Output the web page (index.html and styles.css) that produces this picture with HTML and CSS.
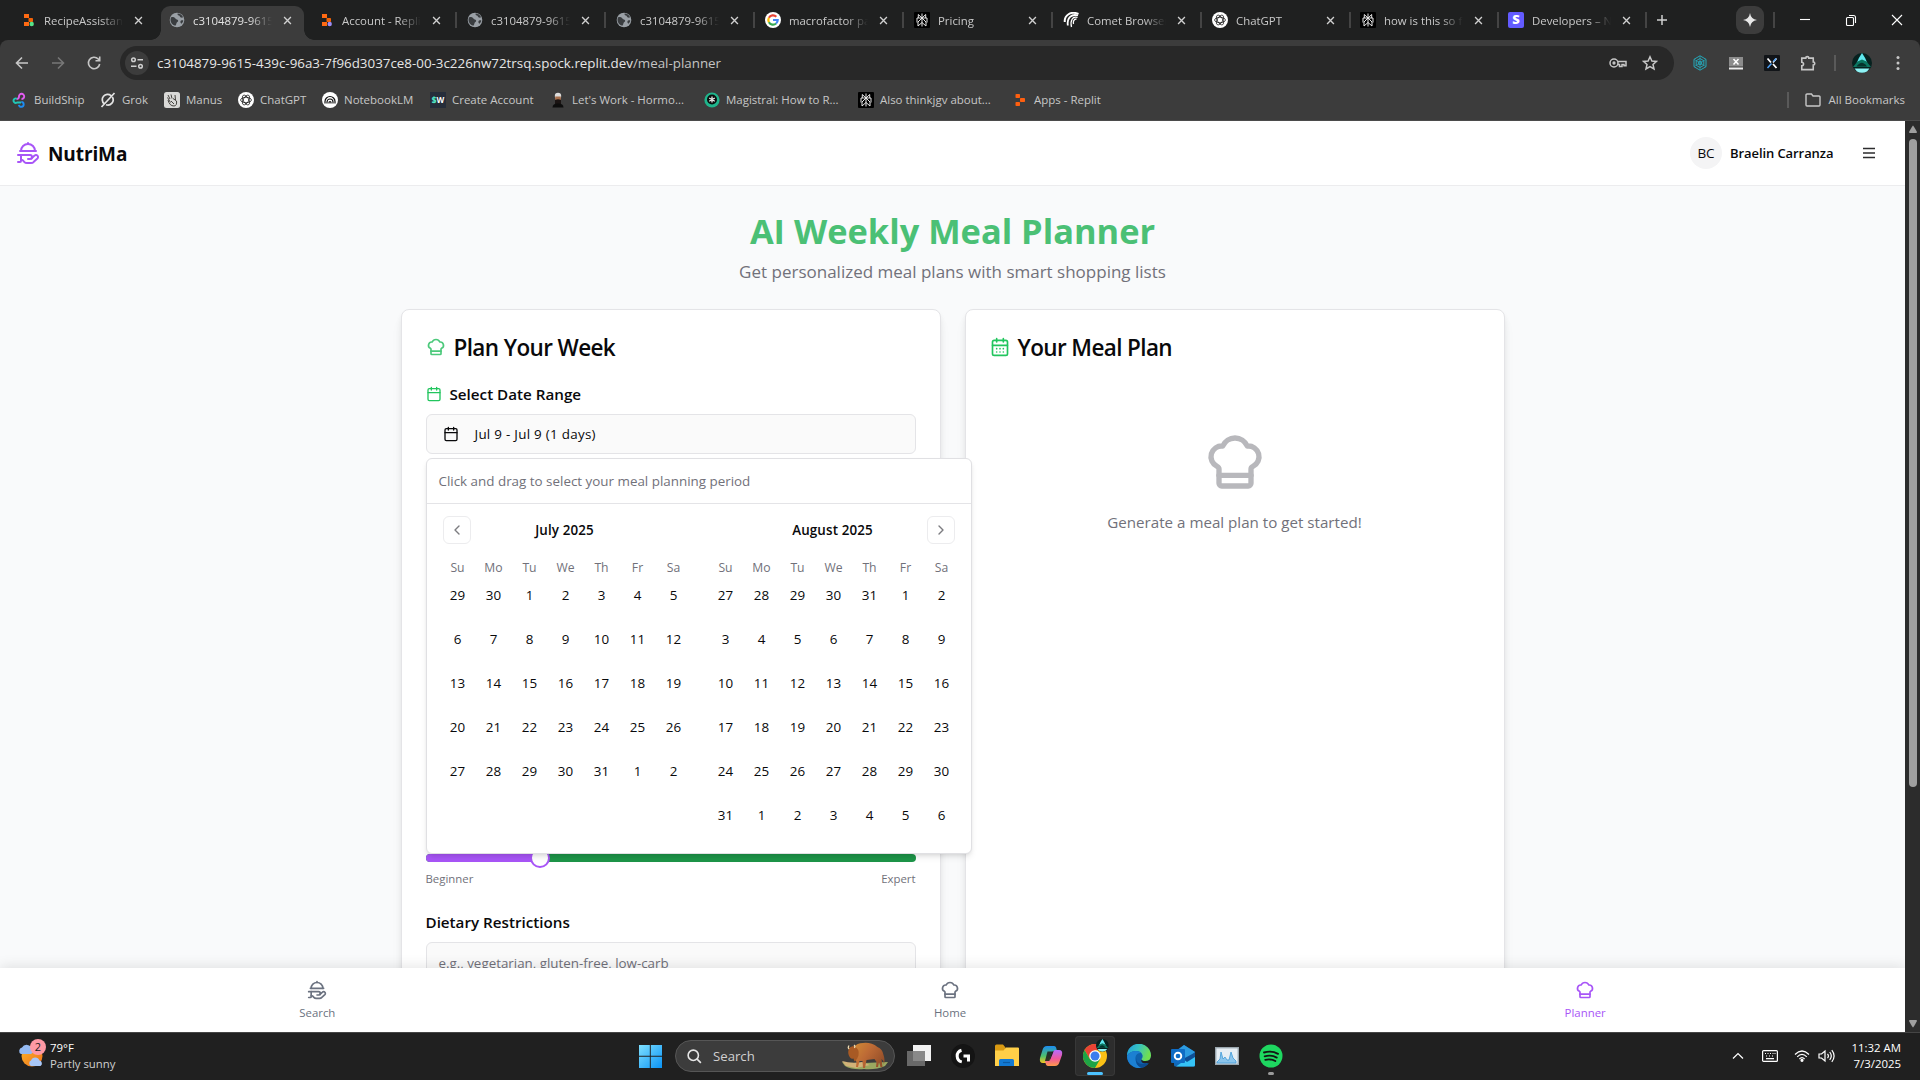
FILE: index.html
```html
<!DOCTYPE html>
<html lang="en">
<head>
<meta charset="utf-8">
<title>NutriMa</title>
<link rel="stylesheet" href="styles.css">
</head>
<body>
<svg class="defs" aria-hidden="true">
  <defs>
    <symbol id="chef" viewBox="0 0 24 24"><path d="M17 21a1 1 0 0 0 1-1v-5.35c0-.457.316-.844.727-1.041a4 4 0 0 0-2.134-7.589 5 5 0 0 0-9.186 0 4 4 0 0 0-2.134 7.588c.411.198.727.585.727 1.041V20a1 1 0 0 0 1 1Z"/><path d="M6 17h12"/></symbol>
    <symbol id="platter" viewBox="0 0 24 24"><path d="M12 3V2"/><path d="m15.4 17.4 3.2-2.8a2 2 0 1 1 2.8 2.9l-3.6 3.3c-.7.8-1.7 1.2-2.8 1.2h-4c-1.1 0-2.1-.4-2.8-1.2l-1.302-1.464A1 1 0 0 0 6.151 19H5"/><path d="M2 14h12a2 2 0 0 1 0 4h-2"/><path d="M4 10h16"/><path d="M5 10a7 7 0 0 1 14 0"/><path d="M5 14v6a1 1 0 0 1-1 1H2"/></symbol>
    <symbol id="cal" viewBox="0 0 24 24"><path d="M8 2v4M16 2v4M3 10h18"/><rect x="3" y="4" width="18" height="18" rx="2"/></symbol>
    <symbol id="caldays" viewBox="0 0 24 24"><path d="M8 2v4M16 2v4M3 10h18M8 14h.01M12 14h.01M16 14h.01M8 18h.01M12 18h.01M16 18h.01"/><rect x="3" y="4" width="18" height="18" rx="2"/></symbol>
    <symbol id="x" viewBox="0 0 10 10"><path d="M1.2 1.2l7.6 7.6M8.8 1.2L1.2 8.8"/></symbol>
    <symbol id="globe" viewBox="0 0 16 16"><circle cx="8" cy="8" r="7.3" fill="#9aa0a6"/><path d="M2.2 5.2c2-.4 3.500.2 4.200 1.300.8 1.200 2.600.7 2.800 2.200.1 1.200-1.600 1.400-1.700 2.600-.1 1-.5 1.800-1.200 2.400C3.500 13 1.600 10.800 1.500 8c0-1 .3-2 .7-2.800zM8.600 1.600c-.3 1 .2 1.700 1.200 1.900 1.200.3 1 1.500 2 2 .8.300 1.700.1 2.300-.2C13.200 3.200 11.200 1.700 8.600 1.600zM14.300 8.500c-1-.6-2.400-.3-2.800.8-.3 1 .2 1.900.9 2.400 1.100-.8 1.700-2 1.900-3.200z" fill="#3a3d40"/></symbol>
    <symbol id="gpt" viewBox="0 0 16 16"><circle cx="8" cy="8" r="8" fill="#fff"/><g fill="none" stroke="#222" stroke-width=".8"><ellipse cx="8" cy="8" rx="5.400" ry="2.700"/><ellipse cx="8" cy="8" rx="5.400" ry="2.700" transform="rotate(60 8 8)"/><ellipse cx="8" cy="8" rx="5.400" ry="2.700" transform="rotate(120 8 8)"/></g></symbol>
    <symbol id="pplx" viewBox="0 0 16 16"><rect width="16" height="16" rx="1" fill="#000"/><g fill="none" stroke="#e8e8e8" stroke-width="1"><path d="M8 1.500v13M8 6L4.300 2.500V6M8 6l3.700-3.500V6M3 10.500V6h10v4.500M8 6l-4 4v4L8 10.500M8 6l4 4v4L8 10.500"/></g></symbol>
    <symbol id="gem" viewBox="0 0 20 20"><circle cx="10" cy="10" r="10" fill="#07211f"/><path d="M10 0Q13 4 15.500 10.500L10 8l-5.500 2.500Q7 4 10 0z" fill="#5fe8ee"/><path d="M1 14L5.500 8.500 10 6.500l4.500 2L19 14z" fill="#0b7560"/><path d="M4.500 13.500Q8 9 11 10q3 1 4 3.500z" fill="#06332c"/><path d="M2.500 15.500h15l-2.500 3Q10 21 5 18.500z" fill="#8ff3f5"/></symbol>
  </defs>
</svg>

<div class="tabstrip">
  <div class="tabs">
    <div class="tab"><svg class="fav" viewBox="0 0 16 16"><path d="M4 2h5v4H4zM4 10h5v4H4z" fill="#ff6a13"/><rect x="8.500" y="6" width="4.500" height="4" rx=".8" fill="#f26207"/><circle cx="11.700" cy="12" r="2.200" fill="#57e389"/></svg><span class="tt">RecipeAssistant</span><svg class="tx"><use href="#x"/></svg></div>
    <div class="tab active"><svg class="fav"><use href="#globe"/></svg><span class="tt">c3104879-9615-439c</span><svg class="tx"><use href="#x"/></svg></div>
    <div class="tab sep"><svg class="fav" viewBox="0 0 16 16"><path d="M4 2h5v4H4zM4 10h5v4H4z" fill="#ff6a13"/><rect x="8.500" y="6" width="4.500" height="4" rx=".8" fill="#f26207"/><circle cx="11.700" cy="12" r="2.200" fill="#9c8cf5"/></svg><span class="tt">Account - Replit</span><svg class="tx"><use href="#x"/></svg></div>
    <div class="tab sep"><svg class="fav"><use href="#globe"/></svg><span class="tt">c3104879-9615-439c</span><svg class="tx"><use href="#x"/></svg></div>
    <div class="tab sep"><svg class="fav"><use href="#globe"/></svg><span class="tt">c3104879-9615-439c</span><svg class="tx"><use href="#x"/></svg></div>
    <div class="tab sep"><svg class="fav" viewBox="0 0 16 16"><circle cx="8" cy="8" r="8" fill="#fff"/><g fill="none" stroke-width="2.200"><path d="M3.900 5.800A4.700 4.700 0 0 1 11.300 4.700" stroke="#ea4335"/><path d="M3.900 5.800a4.700 4.700 0 0 0 0 4.500" stroke="#fbbc05"/><path d="M3.900 10.300a4.700 4.700 0 0 0 7.200 1.200" stroke="#34a853"/><path d="M8 8h4.700c0 1.500-.6 2.700-1.600 3.500" stroke="#4285f4"/></g></svg><span class="tt">macrofactor pay</span><svg class="tx"><use href="#x"/></svg></div>
    <div class="tab sep"><svg class="fav"><use href="#pplx"/></svg><span class="tt">Pricing</span><svg class="tx"><use href="#x"/></svg></div>
    <div class="tab sep"><svg class="fav" viewBox="0 0 16 16" fill="none" stroke="#fff"><path d="M15.500 2C8-1.500 1 3.500 1.800 10" stroke-width="2"/><path d="M15 3.500C8.500 1.500 3.800 6 4.800 13.500" stroke-width="1.800"/><path d="M14.500 5.500C9.500 4 7 8.500 8.500 15M13.500 7C10.500 7 10 10 10.500 12" stroke-width="1.300"/></svg><span class="tt">Comet Browser</span><svg class="tx"><use href="#x"/></svg></div>
    <div class="tab sep"><svg class="fav"><use href="#gpt"/></svg><span class="tt">ChatGPT</span><svg class="tx"><use href="#x"/></svg></div>
    <div class="tab sep"><svg class="fav"><use href="#pplx"/></svg><span class="tt">how is this so fast</span><svg class="tx"><use href="#x"/></svg></div>
    <div class="tab sep"><span class="fav stripe">S</span><span class="tt">Developers – Nu</span><svg class="tx"><use href="#x"/></svg></div>
  </div>
  <svg class="plus" viewBox="0 0 12 12"><path d="M6 1v10M1 6h10"/></svg>
  <div class="winctl">
    <span class="spark"><svg viewBox="0 0 14 14"><path d="M7 0Q7.900 6.100 14 7 7.900 7.900 7 14 6.100 7.900 0 7 6.100 6.100 7 0z"/></svg></span>
    <i class="vsep"></i>
    <svg class="wi" viewBox="0 0 12 12"><path d="M1 5.500h10"/></svg>
    <svg class="wi" viewBox="0 0 12 12"><rect x="1.500" y="3.500" width="7" height="8" rx="1"/><path d="M4 1.500h4.500a2 2 0 0 1 2 2V9"/></svg>
    <svg class="wi" viewBox="0 0 12 12"><path d="M1 1l10 10M11 1L1 11"/></svg>
  </div>
</div>

<div class="toolbar">
  <svg class="tb" viewBox="0 0 16 16"><path d="M14 8H2.500M8 2.500L2.500 8 8 13.500"/></svg>
  <svg class="tb dim" viewBox="0 0 16 16"><path d="M2 8h11.500M8 2.500L13.500 8 8 13.500"/></svg>
  <svg class="tb" viewBox="0 0 16 16"><path d="M13.700 9A5.700 5.700 0 1 1 12.200 4L13.500 5.300M13.700 1.500v4.200H9.500"/></svg>
  <div class="omni">
    <span class="site"><svg viewBox="0 0 14 14"><circle cx="3.500" cy="3.800" r="1.800"/><path d="M7.500 3.800H13M1 10.200h5.500"/><circle cx="10.500" cy="10.200" r="1.800"/></svg></span>
    <span class="url">c3104879-9615-439c-96a3-7f96d3037ce8-00-3c226nw72trsq.spock.replit.dev<span class="path">/meal-planner</span></span>
    <svg class="key" viewBox="0 0 18 12"><circle cx="5" cy="6" r="4"/><circle cx="5" cy="6" r=".9"/><path d="M8.800 4.500h8.200v4.200h-2V7.500h-2v2h-2.500V7.500H8.800"/></svg>
    <svg class="star" viewBox="0 0 16 16"><path d="M8 1.800l1.900 4.200 4.500.4-3.400 3 1 4.500L8 11.500l-4 2.400 1-4.500-3.400-3 4.500-.4z"/></svg>
  </div>
  <div class="exts">
    <svg viewBox="0 0 16 16" fill="none" stroke="#25a7b8"><path d="M8 .8l6 3.500v7.400l-6 3.500-6-3.500V4.300z"/><path d="M8 3.500l3.800 2.200v4.600L8 12.500l-3.800-2.200V5.700z"/><circle cx="8" cy="8" r="1.800"/><path d="M2 4.300l12 7.400M14 4.300L2 11.700M8 1v14" stroke-width=".6"/></svg>
    <svg viewBox="0 0 16 16"><rect x="1" y="2" width="14" height="9.500" fill="#8c8c8c"/><path d="M5.500 4l5 5.500M10.500 4l-5 5.500" stroke="#fff" stroke-width="1.500"/><rect x="1" y="12.500" width="14" height="2" fill="#eee"/></svg>
    <svg viewBox="0 0 16 16"><rect width="16" height="16" rx="1" fill="#111418"/><path d="M3.500 3.500L7 7.500M9 9l3.500 4" stroke="#fff" stroke-width="1.800"/><path d="M12.500 3.500L9 7.500" stroke="#fff" stroke-width="1.500"/><path d="M7.500 8.500l-4 4.500M12 3.500L9.500 6.500" stroke="#4ea1f7" stroke-width="1.500"/></svg>
    <svg viewBox="0 0 18 18" fill="none" stroke="#c7c7c7" stroke-width="1.800"><path d="M2 3.500h4.500a1.700 1.700 0 0 1 3.400 0h5v4.300a1.700 1.700 0 0 1 0 3.400v5.300H2v-4.300a2 2 0 0 0 0-4z"/></svg>
    <i class="vsep"></i>
    <svg class="gem"><use href="#gem"/></svg>
    <svg viewBox="0 0 16 16" fill="#c7c7c7"><circle cx="8" cy="2.500" r="1.500"/><circle cx="8" cy="8" r="1.500"/><circle cx="8" cy="13.500" r="1.500"/></svg>
  </div>
</div>

<div class="marks">
  <div class="mk"><svg viewBox="0 0 16 16" fill="none" stroke-width="1.900"><path d="M9.500 7A2.600 2.600 0 1 0 7 4.500Q7 7 4.500 7" stroke="#e25bf0"/><path d="M5 6.800a2.200 2.200 0 1 0 0 3.700h4" stroke="#21c7b7"/><path d="M9.300 10a2.400 2.400 0 1 1-2.400 2.800" stroke="#1c8df2"/></svg>BuildShip</div>
  <div class="mk"><svg viewBox="0 0 16 16" fill="none" stroke="#e3e3e3" stroke-width="1.700"><path d="M4.200 11.800A5.300 5.300 0 0 1 11 3.600M12.300 5A5.300 5.300 0 0 1 6 12.800M1.500 15L14.500 1"/></svg>Grok</div>
  <div class="mk"><svg viewBox="0 0 16 16"><rect width="16" height="16" rx="2.500" fill="#d9d9d7"/><path d="M4 3l2 4M7 2.500l1 4M4 8c1 4 3 6 6 6 2 0 3-2 2.500-5L9 6.500M11 3l.5 5M3.500 5.500l3 5M7 9l3 3" fill="none" stroke="#44423e" stroke-width="1"/></svg>Manus</div>
  <div class="mk"><svg><use href="#gpt"/></svg>ChatGPT</div>
  <div class="mk"><svg viewBox="0 0 16 16"><circle cx="8" cy="8" r="8" fill="#fff"/><path d="M3 11.500V9.500a5 5 0 0 1 10 0v2M5 11.500v-1.500a3 3 0 0 1 6 0v1.500M7 11.500v-1a1 1 0 0 1 2 0v1" fill="none" stroke="#111" stroke-width="1.200"/></svg>NotebookLM</div>
  <div class="mk"><span class="sw"><b>$</b>W</span>Create Account</div>
  <div class="mk"><svg viewBox="0 0 16 16"><ellipse cx="8" cy="4" rx="3.200" ry="3.200" fill="#ddd"/><rect x="5.200" y="4.500" width="5.600" height="4" fill="#a86f4c"/><path d="M5 8q3-1.500 6 0v4H5z" fill="#1b1413"/><path d="M2.500 15.500q0-4 5.500-4t5.500 4z" fill="#0d0d0d"/></svg>Let's Work - Hormo...</div>
  <div class="mk"><svg viewBox="0 0 16 16"><circle cx="8" cy="8" r="7.600" fill="#1fb58c"/><circle cx="8" cy="7.500" r="5" fill="#0b0f0e"/><path d="M8 4.500v6M5.200 6l5.600 3.200M10.800 6L5.200 9.200" stroke="#eee" stroke-width="1.300"/></svg>Magistral: How to R...</div>
  <div class="mk"><svg><use href="#pplx"/></svg>Also thinkjgv about...</div>
  <div class="mk"><svg viewBox="0 0 16 16" fill="#ff5f0f"><rect x="3.500" y="2" width="4.500" height="4" rx=".8"/><rect x="8" y="6" width="5" height="4" rx=".8"/><rect x="3.500" y="10" width="4.500" height="4" rx=".8"/></svg>Apps - Replit</div>
  <div class="all"><i class="vsep"></i><svg viewBox="0 0 16 14"><path d="M1 2.500V12a1 1 0 0 0 1 1h12a1 1 0 0 0 1-1V4a1 1 0 0 0-1-1H8L6.500 1H2a1 1 0 0 0-1 1z"/></svg><span>All Bookmarks</span></div>
</div>

<div class="viewport">
  <div class="page">
    <header class="head">
      <svg class="ico logo"><use href="#platter"/></svg><span class="brand">NutriMa</span>
      <span class="avatar">BC</span><span class="user">Braelin Carranza</span>
      <svg class="burger" viewBox="0 0 12 12"><path d="M0 1.500h12M0 6h12M0 10.500h12"/></svg>
    </header>
    <main class="main">
      <h1>AI Weekly Meal Planner</h1>
      <p class="sub">Get personalized meal plans with smart shopping lists</p>
      <div class="cards">
        <section class="card">
          <h2><svg class="ico ct"><use href="#chef"/></svg><span>Plan Your Week</span></h2>
          <div class="label"><svg class="ico sm"><use href="#cal"/></svg>Select Date Range</div>
          <div class="anchor">
            <div class="datebtn"><svg class="ico sm"><use href="#cal"/></svg>Jul 9 - Jul 9 (1 days)</div>
            <div class="pop">
              <div class="hint">Click and drag to select your meal planning period</div>
              <div class="months">
                <div class="month">
                  <div class="mhead"><span class="nav"><svg viewBox="0 0 16 16"><path d="M10 4L6 8l4 4"/></svg></span><b>July 2025</b><span></span></div>
                  <div class="grid dow"><span>Su</span><span>Mo</span><span>Tu</span><span>We</span><span>Th</span><span>Fr</span><span>Sa</span></div>
                  <div class="grid days"><span>29</span><span>30</span><span>1</span><span>2</span><span>3</span><span>4</span><span>5</span><span>6</span><span>7</span><span>8</span><span>9</span><span>10</span><span>11</span><span>12</span><span>13</span><span>14</span><span>15</span><span>16</span><span>17</span><span>18</span><span>19</span><span>20</span><span>21</span><span>22</span><span>23</span><span>24</span><span>25</span><span>26</span><span>27</span><span>28</span><span>29</span><span>30</span><span>31</span><span>1</span><span>2</span></div>
                </div>
                <div class="month">
                  <div class="mhead"><span></span><b>August 2025</b><span class="nav"><svg viewBox="0 0 16 16"><path d="M6 4l4 4-4 4"/></svg></span></div>
                  <div class="grid dow"><span>Su</span><span>Mo</span><span>Tu</span><span>We</span><span>Th</span><span>Fr</span><span>Sa</span></div>
                  <div class="grid days"><span>27</span><span>28</span><span>29</span><span>30</span><span>31</span><span>1</span><span>2</span><span>3</span><span>4</span><span>5</span><span>6</span><span>7</span><span>8</span><span>9</span><span>10</span><span>11</span><span>12</span><span>13</span><span>14</span><span>15</span><span>16</span><span>17</span><span>18</span><span>19</span><span>20</span><span>21</span><span>22</span><span>23</span><span>24</span><span>25</span><span>26</span><span>27</span><span>28</span><span>29</span><span>30</span><span>31</span><span>1</span><span>2</span><span>3</span><span>4</span><span>5</span><span>6</span></div>
                </div>
              </div>
            </div>
          </div>
          <div class="slider"><i class="fill"></i><i class="thumb"></i></div>
          <div class="ends"><span>Beginner</span><span>Expert</span></div>
          <div class="label diet">Dietary Restrictions</div>
          <div class="input">e.g., vegetarian, gluten-free, low-carb</div>
        </section>
        <section class="card">
          <h2><svg class="ico ct bright"><use href="#caldays"/></svg><span>Your Meal Plan</span></h2>
          <div class="empty"><svg class="ico big"><use href="#chef"/></svg><span>Generate a meal plan to get started!</span></div>
        </section>
      </div>
    </main>
    <nav class="bottom">
      <a><svg class="ico nv"><use href="#platter"/></svg>Search</a>
      <a><svg class="ico nv"><use href="#chef"/></svg>Home</a>
      <a class="on"><svg class="ico nv"><use href="#chef"/></svg>Planner</a>
    </nav>
  </div>
  <div class="scroll"><svg viewBox="0 0 10 8"><path d="M5 .5Q5.500.5 9 7 9 8 8 8H2Q1 8 1 7 4.500.5 5 .5z"/></svg><i></i><svg class="dn" viewBox="0 0 10 8"><path d="M5 .5Q5.500.5 9 7 9 8 8 8H2Q1 8 1 7 4.500.5 5 .5z"/></svg></div>
</div>

<footer class="taskbar">
  <div class="weather">
    <svg viewBox="0 0 28 30"><defs><linearGradient id="sun" x1="0" y1="0" x2="1" y2="1"><stop offset="0" stop-color="#fbb62a"/><stop offset="1" stop-color="#f0701a"/></linearGradient></defs><circle cx="14" cy="16" r="10.500" fill="url(#sun)"/><path d="M3 14a3.500 3.500 0 0 1 1-6.500 5 5 0 0 1 9 0 3.500 3.500 0 0 1 0 6.500z" fill="#93b9f2"/><path d="M13 26a3 3 0 0 1 0-5.500 4.500 4.500 0 0 1 8.500 0 3 3 0 0 1 1 5.500z" fill="#a9c7f7"/></svg>
    <span class="badge">2</span>
    <div class="wt"><span>79°F</span><span class="dim2">Partly sunny</span></div>
  </div>
  <div class="apps">
    <svg class="start" viewBox="0 0 24 24"><defs><linearGradient id="win" x1="0" y1="0" x2="1" y2="1"><stop offset="0" stop-color="#7fe0ff"/><stop offset="1" stop-color="#0a93f5"/></linearGradient></defs><path d="M0 0h11.300v11.300H0zM12.300 0H24v11.300H12.300zM0 12.300h11.300V24H0zM12.300 12.300H24V24H12.300z" fill="url(#win)"/></svg>
    <div class="search"><svg class="mag" viewBox="0 0 16 16"><circle cx="6.700" cy="6.700" r="5.500"/><path d="M10.800 10.800l4 4"/></svg><span>Search</span>
      <svg class="bison" viewBox="0 0 46 28"><defs><linearGradient id="fur" x1="0" y1="0" x2="1" y2=".6"><stop offset="0" stop-color="#cf8a35"/><stop offset=".5" stop-color="#bd6a35"/><stop offset="1" stop-color="#96502a"/></linearGradient></defs><path d="M0 20q10 3 22 1l24-1-3 4Q34 28 22 27 10 28 3 24z" fill="#9aa860"/><path d="M0 19q10 3 20 1l8 3-14 3-10-2z" fill="#d2b278"/><path d="M12 16l2.500 4-.5 5h2l1.500-6 3 0 .5 7h2l1.500-8 8-1 2 3-.5 5h2l1-5 1.500 5h2l-1-8q3 2 2 6 2-4 0-10-1-6-6-8Q29 0 21 1 15 1 12 5z" fill="url(#fur)"/><path d="M12 4Q7 4.500 6.500 8 5.500 12 8 15.500q1.500 2 3.500 1l1 3q3-2 4-6Q18 7 12 4z" fill="#a85a24"/><path d="M7 7Q5.500 5.500 7 3.500M12.500 6q1-2-.5-3" fill="none" stroke="#f1ddb3" stroke-width="1.200"/></svg></div>
    <span class="app"><svg viewBox="0 0 24 24"><rect x="6" y="1" width="18" height="16" fill="#f2f2f2"/><rect x="0" y="7" width="18" height="15" fill="#777" opacity=".85"/></svg></span>
    <span class="app"><svg viewBox="0 0 24 24"><circle cx="12" cy="12" r="12" fill="#141414"/><path d="M10.500 6.300A6 6 0 0 0 10.800 17.900M12.500 12h5v5.500" fill="none" stroke="#fff" stroke-width="3"/></svg></span>
    <span class="app"><svg viewBox="0 0 24 24"><path d="M0 2a1.500 1.500 0 0 1 1.500-1.500H8l2.500 3V8H0z" fill="#d99a12"/><path d="M0 6.500h8.500L11 3.500h12a1 1 0 0 1 1 1V22H0z" fill="#ffcf48"/><path d="M4 22v-5.500a1.500 1.500 0 0 1 1.500-1.500h12a1.500 1.500 0 0 1 1.500 1.500V22z" fill="#1279d3"/><path d="M8 18.500h7" stroke="#0b5ba5" stroke-width="1.200"/></svg></span>
    <span class="app"><svg viewBox="0 0 24 24"><defs><linearGradient id="c1" x1="0" y1="0" x2="0" y2="1"><stop offset="0" stop-color="#1c8cf0"/><stop offset=".6" stop-color="#4fc06a"/><stop offset="1" stop-color="#f4c61f"/></linearGradient><linearGradient id="c2" x1="0" y1="0" x2="0" y2="1"><stop offset="0" stop-color="#b56bff"/><stop offset=".55" stop-color="#f0589a"/><stop offset="1" stop-color="#ff9a4a"/></linearGradient></defs><path d="M8 2h7q2 0 2.500 3l.5 2h-3q-2 0-2.500 2L10 17q-.5 2-2.500 2H4q-4 0-3-5L3.500 6Q4.500 2 8 2z" fill="url(#c1)"/><path d="M16 22H9q-2 0-2.500-3L6 17h3q2 0 2.500-2L14 9q.5-3 2.500-3H20q4 0 3 5l-2.500 7q-1 4-4.500 4z" fill="url(#c2)"/><path d="M8.500 7.500h5L10 17H6z" fill="#202020" opacity=".9"/></svg></span>
    <span class="app cur"><svg viewBox="0 0 24 24"><circle cx="12" cy="12" r="12" fill="#fbc116"/><path d="M1.600 6A12 12 0 0 1 22.400 6H12l-5.200 9z" fill="#ea4335"/><path d="M1.600 6A12 12 0 0 0 12 24l5.200-9-10.400 0z" fill="#1ea446"/><circle cx="12" cy="12" r="5.800" fill="#fff"/><circle cx="12" cy="12" r="4.500" fill="#3b7ded"/></svg><svg class="mini"><use href="#gem"/></svg></span>
    <span class="app"><svg viewBox="0 0 24 24"><defs><linearGradient id="e1" x1="0" y1="0" x2="1" y2=".3"><stop offset="0" stop-color="#1f9de0"/><stop offset=".5" stop-color="#37c2c0"/><stop offset="1" stop-color="#70df50"/></linearGradient></defs><circle cx="12" cy="12" r="12" fill="#0f62ae"/><path d="M0 11.500A12 12 0 0 1 24 12q0 5-5.500 5-4 0-4-2 1.500-1.500 1-4Q14 7 9 7 3 7 0 11.500z" fill="url(#e1)"/><path d="M0 12Q3 7 9 7q3.500 0 5.500 2-5-.5-6 4-1 7 6 10.700A12 12 0 0 1 0 12z" fill="#1c80d2"/><path d="M9 14q0 6 7 6 4 0 6.500-2-3 5-8.500 5.800Q8 21 9 14z" fill="#0b4c92"/><path d="M14.500 15q-.3 2 4 2 5.500 0 5.500-5v8l-4-1q-7 1-5.500-4z" fill="#202020"/></svg></span>
    <span class="app"><svg viewBox="0 0 24 24"><path d="M3 8l10-7 11 7v13a1.500 1.500 0 0 1-1.500 1.500h-18A1.500 1.500 0 0 1 3 21z" fill="#1068b8"/><path d="M5 7.500L13 1l11 7-9 8H5z" fill="#2c9be0"/><path d="M24 9v12a1.500 1.500 0 0 1-1.500 1.500H5l19-13.500z" fill="#35c3f6"/><path d="M24 8.500V13l-8 5-4-3z" fill="#0f4f96"/><rect y="5" width="14" height="14" rx="1" fill="#0f6cc4"/><circle cx="7" cy="12" r="3.300" fill="none" stroke="#fff" stroke-width="1.900"/></svg></span>
    <span class="app"><svg viewBox="0 0 24 24"><rect x=".7" y="3.700" width="22.600" height="16.600" fill="#e6eef4" stroke="#9aa6ae" stroke-width="1.400"/><path d="M2 18l3-3 1-7 2 7 2-2 2 3 2 0 2-8 2 6 3 3v2H2z" fill="#8bc5ec" stroke="#3f9bd8" stroke-width=".8"/></svg></span>
    <span class="app run"><svg viewBox="0 0 24 24"><circle cx="12" cy="12" r="11.500" fill="#1ed760"/><path d="M5 8.500q7.500-2.200 14 1.300M5.700 12.300q6.500-1.800 12 1.300M6.300 15.800q5.500-1.300 10 1.200" fill="none" stroke="#141414" stroke-width="1.900" stroke-linecap="round"/></svg></span>
  </div>
  <div class="tray">
    <svg class="t1" viewBox="0 0 12 8"><path d="M1 6.500l5-5 5 5"/></svg>
    <svg class="t2" viewBox="0 0 16 12"><rect x=".6" y=".6" width="14.800" height="10.800" rx="1"/><path d="M3 3.500h1M5.500 3.500h1M8 3.500h1M10.500 3.500h1M12.500 3.500h1M4 6h1M7 6h1M10 6h1M4 8.700h8"/></svg>
    <svg class="t3" viewBox="0 0 16 12"><path d="M1 4.500q7-7 14 0M3.200 6.800q4.800-4.800 9.600 0M5.400 9q2.600-2.600 5.200 0"/><circle cx="8" cy="10.300" r="1" fill="#fff"/></svg>
    <svg class="t4" viewBox="0 0 17 14"><path d="M1 5v4h2.500L7 12V2L3.500 5zM9.500 4.800q1.800 2.200 0 4.400M11.700 3q3.200 4 0 8M13.800 1.200q4.600 5.800 0 11.600"/></svg>
    <div class="clock"><span>11:32 AM</span><span>7/3/2025</span></div>
  </div>
</footer>
</body>
</html>
```
FILE: styles.css
```css
* { box-sizing: border-box; }
body {
  margin: 0; width: 1920px; height: 1080px; overflow: hidden;
  display: flex; flex-direction: column;
  font-family: "Open Sans", "Noto Sans", sans-serif;
  background: #202020; color: #09090b;
}
svg { display: block; flex: none; }
.defs { position: absolute; width: 0; height: 0; }
.ico { fill: none; stroke: currentColor; stroke-width: 2; stroke-linecap: round; stroke-linejoin: round; }
.vsep { width: 2px; height: 16px; background: #5a5a5a; flex: none; }

/* tab strip */
.tabstrip { height: 40px; flex: none; background: #1f2020; display: flex; align-items: center; padding-left: 12px; }
.tabs { display: grid; grid-template-columns: repeat(8, 149px) repeat(3, 148px); height: 40px; }
.tab { position: relative; display: flex; align-items: center; padding: 0 0 0 8px; height: 40px; color: #c9c9c9; }
.fav { width: 16px; height: 16px; flex: none; }
.stripe { background: #635bff; border-radius: 2px; color: #fff; font: 800 13px/15px "Open Sans", sans-serif; text-align: center; }
.tt { width: 79px; margin-left: 8px; overflow: hidden; white-space: nowrap; font-size: 11.4px; line-height: 16px; padding-top: 1px;
  -webkit-mask-image: linear-gradient(90deg, #000 72%, transparent); mask-image: linear-gradient(90deg, #000 72%, transparent); }
.tx { width: 9px; height: 9px; margin-left: 11px; stroke: #d0d0d0; stroke-width: 1.5; }
.active { color: #e3e3e3; }
.active::before { content: ""; position: absolute; z-index: 0; left: 0; top: 6px; width: 143px; height: 34px; background: #3c3c3c; border-radius: 9px 9px 0 0; }
.active::after { content: ""; position: absolute; left: -10px; bottom: 0; width: 163px; height: 10px;
  background: radial-gradient(circle at 0 0, transparent 9.5px, #3c3c3c 10px) left / 10px 10px no-repeat,
              radial-gradient(circle at 100% 0, transparent 9.5px, #3c3c3c 10px) right / 10px 10px no-repeat; }
.active > * { position: relative; z-index: 1; }
.sep::after { content: ""; position: absolute; left: 145px; top: 12px; width: 2px; height: 16px; background: #444; }
.plus { width: 12px; height: 12px; margin-left: 8px; stroke: #d0d0d0; stroke-width: 1.5; }
.winctl { margin-left: auto; display: flex; align-items: center; padding-right: 17px; }
.spark { width: 28px; height: 28px; border-radius: 9px; background: #3c3c3c; display: grid; place-items: center; margin-right: 9px; }
.spark svg { width: 14px; height: 14px; fill: #e8e8e8; }
.winctl .vsep { margin-right: 24px; background: #444; }
.wi { width: 12px; height: 12px; fill: none; stroke: #fff; stroke-width: 1.1; margin-left: 34px; }
.vsep + .wi { margin-left: 0; }

/* toolbar */
.toolbar { height: 46px; flex: none; background: #3c3c3c; display: flex; align-items: center; padding-left: 14px; border-radius: 8px 8px 0 0; }
.tb { width: 16px; height: 16px; margin-right: 20px; fill: none; stroke: #c7c7c7; stroke-width: 1.6; }
.tb.dim { stroke: #777; }
.omni { margin-left: -2px; width: 1554px; height: 34px; border-radius: 17px; background: #282828; display: flex; align-items: center; padding: 0 16px 0 5px; }
.site { width: 24px; height: 24px; border-radius: 50%; background: #3c3c3c; display: grid; place-items: center; }
.site svg { width: 14px; height: 14px; fill: none; stroke: #d0d0d0; stroke-width: 1.5; }
.url { margin-left: 8px; font-size: 13.370px; color: #e6e6e6; white-space: nowrap; margin-right: auto; }
.path { color: #c4c4c4; }
.key { width: 18px; height: 12px; fill: none; stroke: #c7c7c7; stroke-width: 1.5; margin-right: 15px; }
.star { width: 16px; height: 16px; fill: none; stroke: #c7c7c7; stroke-width: 1.5; }
.exts { display: flex; align-items: center; margin-left: 18px; gap: 20px; }
.exts > svg { width: 16px; height: 16px; }
.exts > .gem { width: 20px; height: 20px; margin-left: -4px; }
.exts > .vsep { margin-left: -2px; }
.exts > svg:last-child { margin-left: -2px; }

/* bookmarks */
.marks { height: 35px; flex: none; background: #3c3c3c; border-bottom: 1px solid #4b4b4b; padding: 0 15px 7px 12px; display: grid;
  grid-template-columns: 88px 64px 74px 84px 108px 120px 154px 154px 154px 120px 1fr; align-items: center; color: #c7c7c7; font-size: 11.480px; white-space: nowrap; }
.mk { display: flex; align-items: center; gap: 6px; }
.mk svg { width: 16px; height: 16px; }
.sw { width: 16px; height: 16px; background: #262d3a; color: #fff; font: bold 8px/16px "Noto Sans", sans-serif; text-align: center; }
.sw b { color: #4fe3c1; }
.all { display: flex; align-items: center; justify-content: flex-end; }
.all svg { width: 16px; height: 14px; fill: none; stroke: #c7c7c7; stroke-width: 1.4; margin: 0 8px 0 16px; }

/* page */
.viewport { height: 911px; flex: none; display: flex; }
.page { width: 1905px; background: #f9fafb; display: flex; flex-direction: column; overflow: hidden; }
.head { height: 65px; flex: none; background: #fff; border-bottom: 1px solid #ececee; display: flex; align-items: center; padding: 0 30px 0 16px; }
.logo { width: 24px; height: 24px; color: #a855f7; }
.brand { margin-left: 8px; font-size: 19px; font-weight: 700; letter-spacing: -.1px; padding-top: 2px; }
.avatar { margin-left: auto; width: 32px; height: 32px; border-radius: 50%; background: #f4f4f5; display: grid; place-items: center; font-size: 13.500px; }
.user { margin-left: 8px; width: 103px; font-size: 13px; font-weight: 600; letter-spacing: -.08px; white-space: nowrap; }
.burger { width: 12px; height: 12px; margin-left: 30px; stroke: #2c2c2e; stroke-width: 1.5; }
.main { flex: 1; min-height: 0; padding-top: 25px; }
h1 { margin: 0; text-align: center; font-size: 34.400px; line-height: 40px; font-weight: 700; color: #4bc075; }
.sub { margin: 7px 0 0; text-align: center; font-size: 17px; line-height: 28px; color: #71717a; }
.cards { display: grid; grid-template-columns: 540px 540px; gap: 24px; justify-content: center; margin-top: 23px; }
.card { height: 900px; background: #fff; border: 1px solid #e4e4e7; border-radius: 8px; padding: 24px; box-shadow: 0 4px 6px -1px rgba(0,0,0,.1), 0 10px 15px -3px rgba(0,0,0,.06); }
h2 { margin: 0; display: flex; gap: 8px; height: 28px; align-items: center; font-size: 22.500px; line-height: 28px; font-weight: 600; letter-spacing: -.62px; }
.ct { width: 20px; height: 20px; color: #4cc97b; margin-top: -3px; }
.ct.bright { color: #22c55e; }
.label { display: flex; align-items: center; gap: 8px; font-size: 15.200px; font-weight: 600; line-height: 24px; height: 24px; letter-spacing: 0; }
.label .sm { color: #22c55e; }
h2 + .label { margin-top: 20px; }
.sm { width: 16px; height: 16px; }
.anchor { position: relative; margin-top: 8px; }
.datebtn { height: 40px; border: 1px solid #e4e4e7; border-radius: 6px; background: #fafafa; display: flex; align-items: center; gap: 16px; padding-left: 16px; font-size: 13.400px; letter-spacing: .28px; }
.pop { position: absolute; z-index: 5; left: 0; top: 44px; width: 546px; height: 396px; background: #fff; border: 1px solid #e0e0e3; border-radius: 6px; box-shadow: 0 4px 6px -1px rgba(0,0,0,.1), 0 2px 4px -2px rgba(0,0,0,.1); }
.hint { height: 45px; border-bottom: 1px solid #e4e4e7; padding-left: 12px; font-size: 13.400px; line-height: 44px; color: #71717a; }
.months { display: flex; gap: 16px; padding: 12px 12px; }
.month { width: 252px; }
.mhead { display: grid; grid-template-columns: 36px 1fr 36px; height: 28px; align-items: center; justify-items: center; }
.mhead b { font-size: 13.400px; font-weight: 600; letter-spacing: .12px; }
.nav { width: 28px; height: 28px; border: 1px solid #ececee; border-radius: 6px; display: grid; place-items: center; }
.nav svg { width: 16px; height: 16px; fill: none; stroke: #7c7c80; stroke-width: 1.400; stroke-linecap: round; stroke-linejoin: round; }
.grid { display: grid; grid-template-columns: repeat(7, 36px); text-align: center; padding-left: 1px; }
.dow { margin-top: 13px; font-size: 12.200px; line-height: 18px; color: #71717a; padding-top: 2px; }
.days { grid-auto-rows: 44px; font-size: 13.400px; line-height: 36px; }
.slider { position: relative; margin-top: 400px; height: 8px; border-radius: 4px; background: #1d9548; }
.fill { display: block; width: 114px; height: 8px; border-radius: 4px 0 0 4px; background: #a855f7; }
.thumb { position: absolute; left: 104px; top: -6px; width: 20px; height: 20px; border-radius: 50%; background: #fff; border: 2px solid #a855f7; }
.ends { display: flex; justify-content: space-between; margin-top: 9px; font-size: 11.400px; line-height: 16px; color: #71717a; }
.diet { margin-top: 23px; }
.input { margin-top: 8px; height: 80px; border: 1px solid #e4e4e7; border-radius: 6px; background: #fafafa; padding: 9px 12px; font-size: 13.370px; line-height: 22px; color: #71717a; }
.empty { display: flex; flex-direction: column; align-items: center; margin-top: 68px; font-size: 15.150px; line-height: 24px; color: #71717a; }
.big { width: 64px; height: 64px; color: #b8b8bc; margin-bottom: 16px; }
.bottom { height: 64px; flex: none; position: relative; z-index: 6; background: #fff; display: flex; justify-content: space-around; box-shadow: 0 -2px 12px rgba(0,0,0,.1); }
.bottom a { display: flex; flex-direction: column; align-items: center; padding-top: 12px; font-size: 11.400px; line-height: 16px; color: #6b7280; }
.bottom .on { color: #a855f7; }
.nv { width: 20px; height: 20px; margin-bottom: 5px; }
.scroll { width: 15px; background: #2c2c2c; display: flex; flex-direction: column; align-items: center; padding: 4px 0; }
.scroll svg { width: 10px; height: 8px; fill: #9f9f9f; }
.scroll i { width: 8px; height: 648px; border-radius: 4px; background: #9f9f9f; margin-top: 6px; }
.scroll .dn { transform: rotate(180deg); margin-top: auto; }

/* taskbar */
.taskbar { height: 48px; flex: none; background: #202020; border-top: 1px solid #454545; color: #fff; display: grid; grid-template-columns: 639px 1fr auto; align-items: center; font-size: 11.400px; line-height: 16px; }
.weather { position: relative; display: flex; align-items: center; padding-left: 18px; }
.weather > svg { width: 28px; height: 30px; margin-top: -4px; }
.badge { position: absolute; left: 30px; top: -3px; width: 16px; height: 16px; border-radius: 50%; background: #ff99a4; color: #1c1c1c; font-size: 11px; line-height: 16px; text-align: center; }
.wt { margin-left: 4px; margin-top: -2px; display: flex; flex-direction: column; }
.dim2 { color: #cfcfcf; }
.apps { display: flex; align-items: center; height: 47px; padding-bottom: 1px; }
.start { width: 23px; height: 23px; }
.search { width: 220px; height: 32px; margin: 0 4px 0 13px; border: 1px solid #565656; border-radius: 16px; background: #3c3c3c; display: flex; align-items: center; padding: 0 6px 0 11px; font-size: 13.200px; color: #d0d0d0; }
.mag { width: 15px; height: 15px; margin-right: 11px; fill: none; stroke: #e6e6e6; stroke-width: 1.700; }
.bison { width: 46px; height: 28px; margin-left: auto; }
.app { position: relative; width: 40px; height: 40px; margin-right: 4px; border-radius: 4px; display: grid; place-items: center; }
.app svg { width: 24px; height: 24px; }
.cur { background: #2d2d2d; box-shadow: inset 0 0 0 1px #383838; }
.cur::after { content: ""; position: absolute; left: 12px; bottom: 1px; width: 16px; height: 3px; border-radius: 2px; background: #4cc2ff; }
.run::after { content: ""; position: absolute; left: 17px; bottom: 1px; width: 6px; height: 3px; border-radius: 2px; background: #9a9a9a; }
.app .mini { position: absolute; right: 3px; top: 3px; width: 16px; height: 16px; }
.mini use { transform: scale(.8); }
.tray { display: flex; align-items: center; padding: 0 19px 2px 0; }
.tray > svg { fill: none; stroke: #fff; stroke-width: 1.200; }
.t1 { width: 12px; height: 8px; margin-right: 18px; }
.t2 { width: 16px; height: 12px; margin-right: 16px; }
.t3 { width: 16px; height: 12px; margin-right: 8px; }
.t4 { width: 17px; height: 14px; margin-right: 15px; }
.clock { display: flex; flex-direction: column; width: 51px; white-space: nowrap; align-items: flex-end; }
```
